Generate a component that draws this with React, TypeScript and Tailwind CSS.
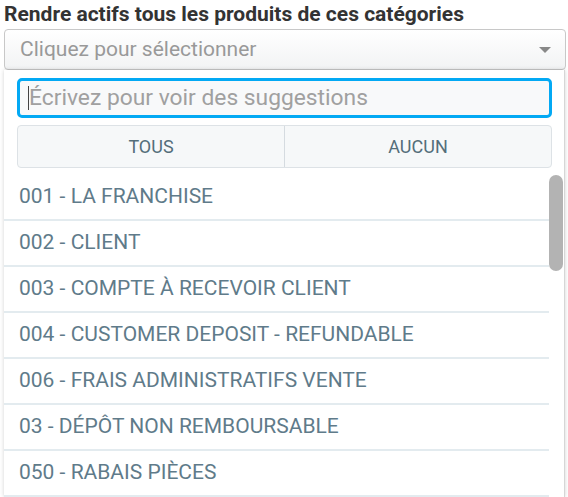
const categories = [
  '001 - LA FRANCHISE',
  '002 - CLIENT',
  '003 - COMPTE À RECEVOIR CLIENT',
  '004 - CUSTOMER DEPOSIT - REFUNDABLE',
  '006 - FRAIS ADMINISTRATIFS VENTE',
  '03 - DÉPÔT NON REMBOURSABLE',
  '050 - RABAIS PIÈCES',
];

const App = () => {
  return (
    <div className="w-[568px] h-[497px] overflow-hidden bg-white font-['Roboto',sans-serif]">
      {/* Label */}
      <div className="px-[4px] h-[29px] flex items-center text-[21px] font-bold text-[#333] leading-none">
        Rendre actifs tous les produits de ces catégories
      </div>

      {/* Select */}
      <div className="ml-[4px] mr-[2px] h-[41px] flex items-center justify-between pl-[15px] pr-[14px] border border-[#c8c8c8] rounded-[4px] bg-gradient-to-b from-white to-[#f2f3f4]">
        <span className="text-[21px] text-[#999]">Cliquez pour sélectionner</span>
        <span className="w-0 h-0 border-l-[6px] border-r-[6px] border-t-[6px] border-l-transparent border-r-transparent border-t-[#888]"></span>
      </div>

      {/* Dropdown panel */}
      <div className="ml-[4px] mr-[3px] bg-white shadow-[0_0_4px_rgba(0,0,0,0.18)] border-r border-[#d6d6d6]">
        <div className="pl-[13px] pr-[12px] pt-[8px]">
          <div className="h-[40px] flex items-center pl-[8px] border-[3px] border-[#03a9f4] rounded-[5px] bg-[#f8f9fa]">
            <span className="inline-block w-px h-[24px] bg-[#444]"></span>
            <span className="text-[22.8px] text-[#a0a0a0]">Écrivez pour voir des suggestions</span>
          </div>
          <div className="mt-[7px] h-[43px] flex border border-[#dde2e6] rounded-[4px] bg-[#f6f8f9] text-[18px] text-[#546e7a]">
            <div className="flex-1 flex items-center justify-center border-r border-[#d5dbe0]">TOUS</div>
            <div className="flex-1 flex items-center justify-center">AUCUN</div>
          </div>
        </div>

        <div className="flex mt-[7px]">
          <ul className="flex-1">
            {categories.map((c) => (
              <li
                key={c}
                className="h-[46px] flex items-center pl-[15px] border-b-2 border-[#e3ebef] text-[21px] text-[#5f7b8a]"
              >
                {c}
              </li>
            ))}
          </ul>
          <div className="w-[15px]">
            <div className="h-[96px] w-[14px] rounded-full bg-[#b3b3b3]"></div>
          </div>
        </div>
      </div>
    </div>
  );
};

export default App;
